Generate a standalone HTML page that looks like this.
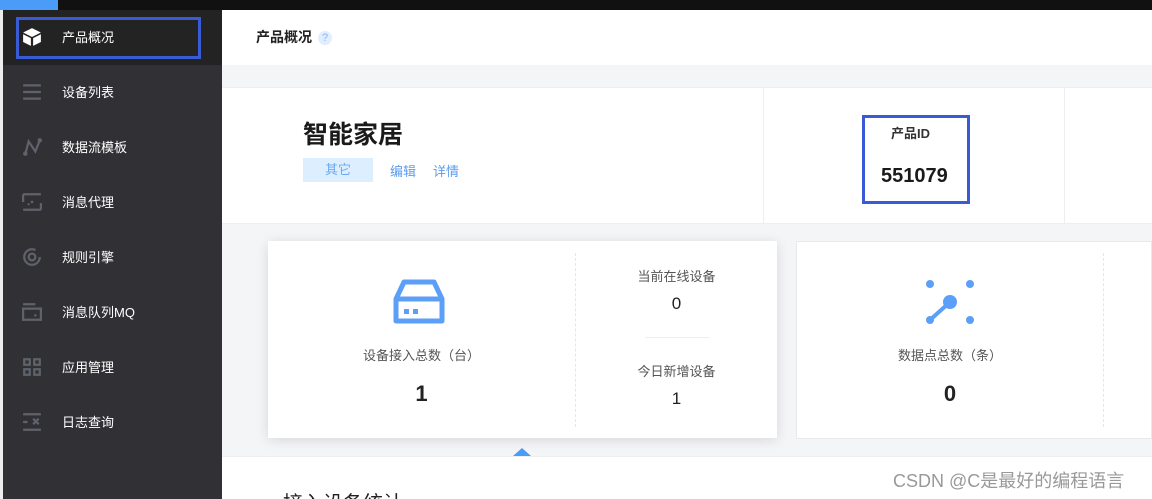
<!DOCTYPE html>
<html style="width:1152px;height:499px;overflow:hidden"><head><meta charset="utf-8"><style>
*{margin:0;padding:0;box-sizing:border-box}
body{width:1152px;height:499px;overflow:hidden;background:#f4f5f7;font-family:"Liberation Sans","Noto Sans CJK SC",sans-serif;position:relative}
.abs{position:absolute}
.side{left:3px;top:10px;width:219px;height:489px;background:#303035}
.item{position:absolute;left:0;width:219px;height:55px;color:#fff;font-size:13px}
.item span{position:absolute;left:59px;top:17px}
.item svg{position:absolute;left:19px;top:17px}
</style></head><body>
<div class="abs" style="left:0;top:0;width:1152px;height:10px;background:#111"></div>
<div class="abs" style="left:0;top:0;width:58px;height:10px;background:#4a9cf8"></div>
<div class="abs" style="left:0;top:10px;width:3px;height:489px;background:#eee"></div>
<div class="abs side">
 <div class="item" style="top:0;background:#232323"><svg width="20" height="20" viewBox="0 0 18 18"><path d="M9 1 L17 5 L9 9 L1 5Z" fill="#fff"/><path d="M1 6.5 L8 10 V17 L1 13.5Z M17 6.5 L10 10 V17 L17 13.5Z" fill="#fff"/></svg><span>产品概况</span></div>
 <div class="abs" style="left:13px;top:7px;width:185px;height:42px;border:3px solid #3a5bd6"></div>
 <div class="item" style="top:55px"><svg width="20" height="20" viewBox="0 0 18 18"><path d="M1 3H17M1 9H17M1 15H17" stroke="#5f626b" stroke-width="2"/></svg><span>设备列表</span></div>
 <div class="item" style="top:110px"><svg width="20" height="20" viewBox="0 0 18 18"><path d="M3 15 L6 4 L12 13 L16 3" stroke="#5f626b" stroke-width="2" fill="none"/><circle cx="3" cy="15" r="2" fill="#5f626b"/><circle cx="16" cy="3" r="2" fill="#5f626b"/></svg><span>数据流模板</span></div>
 <div class="item" style="top:165px"><svg width="20" height="20" viewBox="0 0 18 18"><path d="M1 2H17M1 16H17M1 2V9M17 10V16" stroke="#5f626b" stroke-width="2" fill="none"/><circle cx="9" cy="9" r="1.2" fill="#5f626b"/><circle cx="6" cy="11" r="1" fill="#5f626b"/></svg><span>消息代理</span></div>
 <div class="item" style="top:220px"><svg width="20" height="20" viewBox="0 0 18 18"><circle cx="9" cy="9" r="7" stroke="#5f626b" stroke-width="2" fill="none" stroke-dasharray="36 8"/><circle cx="9" cy="9" r="3" stroke="#5f626b" stroke-width="2" fill="none"/></svg><span>规则引擎</span></div>
 <div class="item" style="top:275px"><svg width="20" height="20" viewBox="0 0 18 18"><path d="M1 2H12M1 6H17V16H1Z" stroke="#5f626b" stroke-width="2" fill="none"/><rect x="11" y="11" width="2" height="2" fill="#5f626b"/></svg><span>消息队列MQ</span></div>
 <div class="item" style="top:330px"><svg width="20" height="20" viewBox="0 0 18 18"><path d="M2 2h5v5h-5zM11 2h5v5h-5zM2 11h5v5h-5zM11 11h5v5h-5z" stroke="#5f626b" stroke-width="2" fill="none"/></svg><span>应用管理</span></div>
 <div class="item" style="top:385px"><svg width="20" height="20" viewBox="0 0 18 18"><path d="M1 2H17M1 16H17M1 9H5M10 6L15 11M15 6L10 11" stroke="#5f626b" stroke-width="2" fill="none"/></svg><span>日志查询</span></div>
</div>
<div class="abs" style="left:222px;top:10px;width:930px;height:55px;background:#fff"></div>
<div class="abs" style="left:256px;top:27px;font-size:14px;font-weight:bold;color:#222">产品概况</div>
<div class="abs" style="left:318px;top:31px;width:14px;height:14px;border-radius:7px;background:#e1eefe;color:#8ab4f8;font-size:11px;text-align:center;line-height:14px">?</div>
<div class="abs" style="left:222px;top:87px;width:930px;height:137px;background:#fff;border-top:1px solid #eceef2;border-bottom:1px solid #eceef2"></div>
<div class="abs" style="left:763px;top:88px;width:1px;height:135px;background:#eceef2"></div>
<div class="abs" style="left:1064px;top:88px;width:1px;height:135px;background:#eceef2"></div>
<div class="abs" style="left:303px;top:115px;font-size:25px;font-weight:bold;color:#1a1a1a">智能家居</div>
<div class="abs" style="left:303px;top:158px;width:70px;height:24px;background:#ddeeff;color:#6aa8f5;font-size:13px;text-align:center;line-height:24px">其它</div>
<div class="abs" style="left:390px;top:161px;font-size:13px;color:#5a9cf0">编辑</div>
<div class="abs" style="left:433px;top:161px;font-size:13px;color:#5a9cf0">详情</div>
<div class="abs" style="left:862px;top:115px;width:108px;height:89px;border:3px solid #3a5bd6"></div>
<div class="abs" style="left:891px;top:123px;font-size:13px;font-weight:bold;color:#333">产品ID</div>
<div class="abs" style="left:881px;top:165px;font-size:20px;font-weight:bold;color:#1a1a1a">551079</div>
<div class="abs" style="left:268px;top:241px;width:509px;height:197px;background:#fff;box-shadow:0 2px 12px rgba(0,0,0,.12)"></div>
<div class="abs" style="left:575px;top:253px;width:0;height:174px;border-left:1px dashed #e6e6e6"></div>
<svg class="abs" style="left:392px;top:279px" width="60" height="48"><path d="M4 20 L12 3 H42 L50 20 V42 H4Z M4 20 H50" stroke="#5c9ff8" stroke-width="5" fill="none" stroke-linejoin="round"/><rect x="12" y="30" width="5" height="5" fill="#5c9ff8"/><rect x="21" y="30" width="5" height="5" fill="#5c9ff8"/></svg>
<div class="abs" style="left:268px;top:345px;width:307px;text-align:center;font-size:13px;color:#555">设备接入总数（台）</div>
<div class="abs" style="left:268px;top:381px;width:307px;text-align:center;font-size:22px;font-weight:bold;color:#222">1</div>
<div class="abs" style="left:576px;top:266px;width:201px;text-align:center;font-size:13px;color:#555">当前在线设备</div>
<div class="abs" style="left:576px;top:294px;width:201px;text-align:center;font-size:17px;color:#222">0</div>
<div class="abs" style="left:645px;top:337px;width:65px;height:1px;background:#eee"></div>
<div class="abs" style="left:576px;top:361px;width:201px;text-align:center;font-size:13px;color:#555">今日新增设备</div>
<div class="abs" style="left:576px;top:389px;width:201px;text-align:center;font-size:17px;color:#222">1</div>
<div class="abs" style="left:796px;top:241px;width:356px;height:198px;background:#fff;border:1px solid #e8e9ec"></div>
<div class="abs" style="left:1103px;top:253px;height:174px;border-left:1px dashed #e6e6e6"></div>
<svg class="abs" style="left:922px;top:278px" width="56" height="50"><circle cx="8" cy="6" r="4" fill="#5c9ff8"/><circle cx="48" cy="6" r="4" fill="#5c9ff8"/><circle cx="48" cy="42" r="4" fill="#5c9ff8"/><circle cx="8" cy="42" r="4" fill="#5c9ff8"/><circle cx="28" cy="24" r="7" fill="#5c9ff8"/><path d="M8 42 L28 24" stroke="#5c9ff8" stroke-width="4"/></svg>
<div class="abs" style="left:797px;top:345px;width:306px;text-align:center;font-size:13px;color:#555">数据点总数（条）</div>
<div class="abs" style="left:797px;top:381px;width:306px;text-align:center;font-size:22px;font-weight:bold;color:#222">0</div>
<div class="abs" style="left:222px;top:456px;width:930px;height:43px;background:#fff;border-top:1px solid #eceef2"></div>
<div class="abs" style="left:513px;top:448px;width:0;height:0;border-left:9px solid transparent;border-right:9px solid transparent;border-bottom:8px solid #4a9cf8"></div>
<div class="abs" style="left:283px;top:487px;font-size:20px;color:#222">接入设备统计</div>
<div class="abs" style="left:893px;top:467px;font-size:18px;color:#999">CSDN @C是最好的编程语言</div>
</body></html>
